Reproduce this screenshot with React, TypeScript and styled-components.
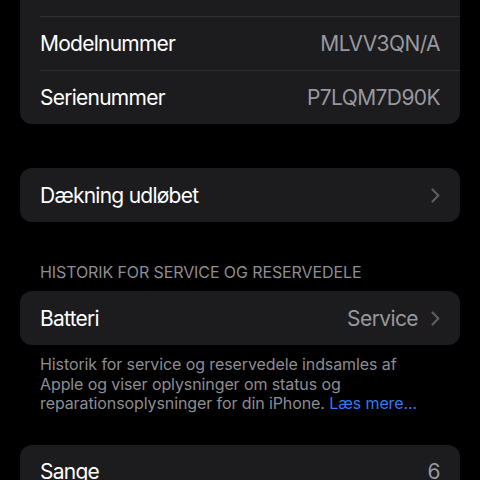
import React from "react";
import styled, { createGlobalStyle } from "styled-components";

const GlobalStyle = createGlobalStyle`
  html, body {
    margin: 0;
    padding: 0;
    background: #000;
  }
  body {
    font-family: Inter, "Noto Sans", "Liberation Sans", sans-serif;
    -webkit-font-smoothing: antialiased;
    overflow: hidden;
  }
`;

const Page = styled.div`
  width: 480px;
  height: 480px;
  overflow: hidden;
  background: #000;
  padding: 0 20px;
  box-sizing: border-box;
  display: flex;
  flex-direction: column;
`;

const Card = styled.div<{ $gap?: number; $clipTop?: boolean }>`
  flex-shrink: 0;
  background: #1c1c1e;
  border-radius: ${(p) => (p.$clipTop ? "0 0 12px 12px" : "12px")};
  margin-top: ${(p) => p.$gap ?? 0}px;
  overflow: hidden;
`;

const CardTail = styled.div`
  height: 16px;
`;

const Row = styled.div`
  padding-left: 20px;
`;

const RowInner = styled.div<{ $divider?: boolean }>`
  height: 54px;
  box-sizing: border-box;
  display: flex;
  align-items: center;
  justify-content: space-between;
  padding-right: 20px;
  border-top: ${(p) => (p.$divider ? "1px solid #303033" : "none")};
`;

const Label = styled.span`
  color: #ffffff;
  font-size: 21px;
  letter-spacing: -0.75px;
`;

const Value = styled.span`
  color: #98989e;
  font-size: 21px;
  letter-spacing: -0.6px;
`;

const Trailing = styled.div`
  display: flex;
  align-items: center;
  gap: 13px;
`;

const SectionHeader = styled.div`
  margin-top: 40px;
  padding: 0 20px 9px;
  color: #8d8d93;
  font-size: 16px;
  line-height: 20px;
  letter-spacing: -0.1px;
`;

const Footer = styled.div`
  padding: 10px 36px 0 20px;
  color: #8d8d93;
  font-size: 16px;
  line-height: 19.5px;
  letter-spacing: -0.1px;
`;

const Link = styled.span`
  color: #2f7cf0;
`;

const Chevron = () => (
  <svg width="9" height="15" viewBox="0 0 9 15" fill="none">
    <path
      d="M1.5 1.5 L7.3 7.5 L1.5 13.5"
      stroke="#5c5c61"
      strokeWidth="2.2"
      strokeLinecap="round"
      strokeLinejoin="round"
    />
  </svg>
);

type Item = { label: string; value?: string; chevron?: boolean };

const Group = ({
  items,
  gap,
  continued,
}: {
  items: Item[];
  gap?: number;
  continued?: boolean;
}) => (
  <Card $gap={gap} $clipTop={continued}>
    {continued && <CardTail />}
    {items.map((it, i) => (
      <Row key={it.label}>
        <RowInner $divider={continued || i > 0}>
          <Label>{it.label}</Label>
          <Trailing>
            {it.value && <Value>{it.value}</Value>}
            {it.chevron && <Chevron />}
          </Trailing>
        </RowInner>
      </Row>
    ))}
  </Card>
);

export default function App() {
  return (
    <Page>
      <GlobalStyle />
      <Group
        continued
        items={[
          { label: "Modelnummer", value: "MLVV3QN/A" },
          { label: "Serienummer", value: "P7LQM7D90K" },
        ]}
      />
      <Group gap={44} items={[{ label: "Dækning udløbet", chevron: true }]} />
      <SectionHeader>HISTORIK FOR SERVICE OG RESERVEDELE</SectionHeader>
      <Group items={[{ label: "Batteri", value: "Service", chevron: true }]} />
      <Footer>
        Historik for service og reservedele indsamles af Apple og viser
        oplysninger om status og reparationsoplysninger for din iPhone.{" "}
        <Link>Læs mere...</Link>
      </Footer>
      <Group gap={31} items={[{ label: "Sange", value: "6" }]} />
    </Page>
  );
}
